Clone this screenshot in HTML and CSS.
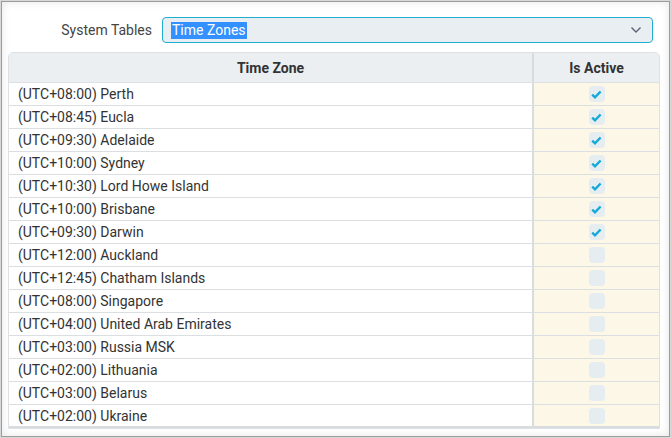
FILE: index.html
```html
<!DOCTYPE html>
<html lang="en">
<head>
    <meta charset="UTF-8">
    <title>System Tables</title>
    <link rel="stylesheet" href="styles.css">
</head>
<body>
    <div class="frame">
        <div class="toolbar">
            <label class="field-label">System Tables</label>
            <div class="select-box">
                <span class="select-value">Time Zones</span>
                <svg class="chevron" width="12" height="8" viewBox="0 0 12 8">
                    <path d="M1.5 1.5 L6 6 L10.5 1.5" fill="none" stroke="#5a6472" stroke-width="1.4"/>
                </svg>
            </div>
        </div>
        <div class="grid">
            <div class="grid-head">
                <div class="col-zone">Time Zone</div>
                <div class="col-active">Is Active</div>
            </div>
            <div class="grid-body"></div>
        </div>
    </div>
    <script>
        const zones = [
            ['(UTC+08:00) Perth', true],
            ['(UTC+08:45) Eucla', true],
            ['(UTC+09:30) Adelaide', true],
            ['(UTC+10:00) Sydney', true],
            ['(UTC+10:30) Lord Howe Island', true],
            ['(UTC+10:00) Brisbane', true],
            ['(UTC+09:30) Darwin', true],
            ['(UTC+12:00) Auckland', false],
            ['(UTC+12:45) Chatham Islands', false],
            ['(UTC+08:00) Singapore', false],
            ['(UTC+04:00) United Arab Emirates', false],
            ['(UTC+03:00) Russia MSK', false],
            ['(UTC+02:00) Lithuania', false],
            ['(UTC+03:00) Belarus', false],
            ['(UTC+02:00) Ukraine', false]
        ];

        const body = document.querySelector('.grid-body');
        const tick = '<svg width="11" height="9" viewBox="0 0 11 9"><path d="M1.2 4.6 L4 7.3 L9.6 1.5" fill="none" stroke="#14a9d6" stroke-width="2.4"/></svg>';

        zones.forEach(([name, active]) => {
            const row = document.createElement('div');
            row.className = 'grid-row';
            row.innerHTML = `<div class="col-zone">${name}</div>` +
                `<div class="col-active"><span class="check">${active ? tick : ''}</span></div>`;
            body.appendChild(row);
        });
    </script>
</body>
</html>
```

FILE: styles.css
```css
* {
    margin: 0;
    padding: 0;
    box-sizing: border-box;
}
body {
    font-family: Roboto, "Liberation Sans", sans-serif;
    width: 671px;
    height: 438px;
    background-color: #d8d8d8;
    padding: 1px;
}
.frame {
    height: 436px;
    border: 1px solid #9c9c9c;
    background-color: #fff;
    box-shadow: inset 0 0 8px rgba(0, 0, 0, 0.10);
    padding: 15px 9px 0 6px;
}
.toolbar {
    display: flex;
    align-items: center;
    margin-bottom: 9px;
}
.field-label {
    width: 154px;
    text-align: right;
    padding-right: 10px;
    font-size: 14px;
    color: #444;
}
.select-box {
    flex: 1;
    height: 26px;
    margin-right: 7px;
    display: flex;
    align-items: center;
    justify-content: space-between;
    padding: 0 10px 0 8px;
    background-color: #e9eef2;
    border: 1px solid #1eaed0;
    border-radius: 4px;
}
.select-value {
    font-size: 14px;
    color: #fff;
    background-color: #3390ff;
    padding: 0 1px;
    line-height: 17px;
}
.grid {
    border: 1px solid #dde1e4;
    border-radius: 5px 5px 0 0;
    overflow: hidden;
    font-size: 14px;
    color: #333;
}
.grid-head {
    display: flex;
    height: 30px;
    background-color: #ebeff2;
    font-weight: bold;
    border-bottom: 1px solid #dde1e4;
}
.grid-head div {
    display: flex;
    align-items: center;
    justify-content: center;
}
.col-zone {
    flex: 1;
    border-right: 2px solid #d8dcdf;
}
.col-active {
    width: 125px;
}
.grid-row {
    display: flex;
    height: 23px;
    border-bottom: 1px solid #dcdfe1;
}
.grid-row:last-child {
    border-bottom: 2px solid #d8dcdf;
}
.grid-row .col-zone {
    display: flex;
    align-items: center;
    padding-left: 9px;
    background-color: #fff;
}
.grid-row .col-active {
    display: flex;
    align-items: center;
    justify-content: center;
    background-color: #fdf7e8;
}
.check {
    width: 16px;
    height: 16px;
    border-radius: 4px;
    background-color: #e6edf1;
    display: flex;
    align-items: center;
    justify-content: center;
}
```
